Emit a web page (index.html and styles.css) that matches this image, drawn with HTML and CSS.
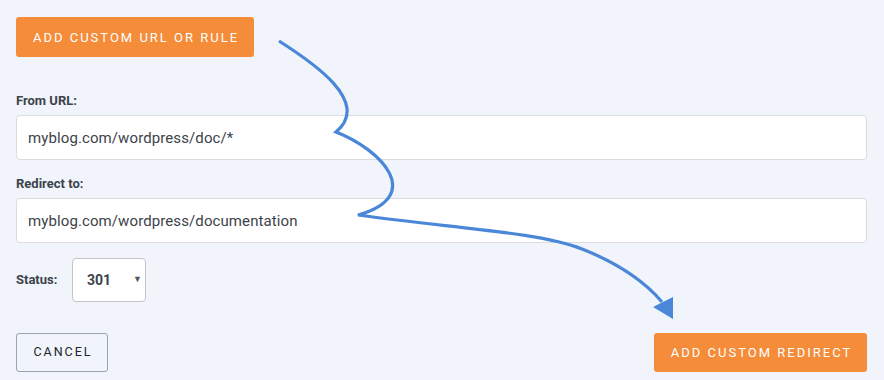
FILE: index.html
```html
<!DOCTYPE html>
<html>
<head>
<meta charset="utf-8">
<link rel="stylesheet" href="styles.css">
</head>
<body>
<div class="page">
  <div class="top">
    <button class="btn btn-primary">Add custom URL or rule</button>
  </div>
  <div class="field first">
    <label class="label">From URL:</label>
    <div class="input">myblog.com/wordpress/doc/*</div>
  </div>
  <div class="field">
    <label class="label">Redirect to:</label>
    <div class="input">myblog.com/wordpress/documentation</div>
  </div>
  <div class="status-row">
    <span class="label inline">Status:</span>
    <div class="select"><span class="val">301</span><span class="caret">▼</span></div>
  </div>
  <div class="actions">
    <button class="btn btn-outline">Cancel</button>
    <button class="btn btn-primary">Add custom redirect</button>
  </div>
  <svg class="arrow" width="884" height="380" viewBox="0 0 884 380">
    <path d="M279,41 C312,62 372,102 336,132 C382,150 425,196 358,215 C450,228 540,232 582,249 C620,264 645,282 662,302" fill="none" stroke="#4a87d9" stroke-width="3.2" stroke-linejoin="miter"/>
    <polygon points="653,307 673,297 673,319" fill="#4a87d9"/>
  </svg>
</div>
</body>
</html>
```
FILE: styles.css
```css
* { box-sizing: border-box; }
html, body { margin: 0; padding: 0; }
body {
  background: #f1f5fb;
  font-family: Roboto, "Liberation Sans", sans-serif;
  color: #3c434a;
  width: 884px;
  height: 380px;
  overflow: hidden;
}
.page {
  position: relative;
  padding: 17px 17px 0 16px;
  height: 380px;
}
.btn {
  font-family: Roboto, "Liberation Sans", sans-serif;
  text-transform: uppercase;
  letter-spacing: 2px;
  border-radius: 3px;
  cursor: pointer;
  line-height: 1;
  white-space: nowrap;
}
.btn-primary {
  background: #f48c3a;
  color: #fff;
  border: none;
  font-size: 13px;
  height: 40px;
  padding: 0 0 0 2px;
}
.top .btn-primary { width: 238px; }
.btn-outline {
  background: transparent;
  border: 1px solid #98a3b3;
  color: #1d2327;
  font-size: 12.5px;
  height: 39px;
  width: 92px;
  padding: 0 0 0 2px;
}
.field { display: flex; flex-direction: column; }
.field.first { margin-top: 36px; }
.field + .field { margin-top: 16px; }
.label {
  font-size: 13px;
  font-weight: 700;
  line-height: 16px;
  color: #3c434a;
  margin-bottom: 6px;
}
.label.inline { margin: 0; width: 56px; }
.input {
  height: 45px;
  background: #fff;
  border: 1px solid #dcdcde;
  border-radius: 4px;
  padding: 0 11px;
  display: flex;
  align-items: center;
  font-size: 15px;
  letter-spacing: 0.1px;
  color: #3c434a;
}
.status-row {
  display: flex;
  align-items: center;
  margin-top: 15px;
}
.select {
  width: 74px;
  height: 44px;
  background: #fff;
  border: 1px solid #c3c4c7;
  border-radius: 4px;
  display: flex;
  align-items: center;
  padding: 0 0 0 14px;
  position: relative;
}
.select .val { font-size: 14px; font-weight: 700; color: #3c434a; }
.select .caret { font-size: 9px; color: #50575e; margin-left: 22px; margin-top: -2px; }
.actions {
  display: flex;
  justify-content: space-between;
  margin-top: 31px;
}
.actions .btn-primary { width: 213px; height: 39px; font-size: 13px; }
.arrow {
  position: absolute;
  left: 0;
  top: 0;
  pointer-events: none;
}
```
